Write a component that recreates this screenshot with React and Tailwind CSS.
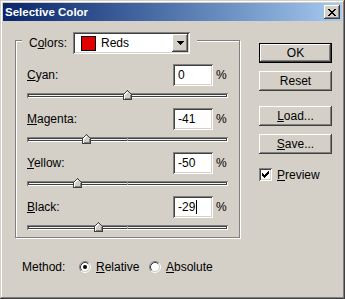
import React from "react";

const sunken =
  "shadow-[inset_1px_1px_0_#808080,inset_-1px_-1px_0_#ffffff,inset_2px_2px_0_#404040,inset_-2px_-2px_0_#d4d0c8]";
const raised =
  "shadow-[inset_-1px_-1px_0_#404040,inset_1px_1px_0_#ffffff,inset_-2px_-2px_0_#808080,inset_2px_2px_0_#d4d0c8]";
const track =
  "shadow-[inset_1px_1px_0_#808080,inset_-1px_-1px_0_#ffffff,inset_2px_2px_0_#404040,inset_-2px_-2px_0_#404040]";

function Field({ value, caret }) {
  return (
    <div className={`w-[40px] h-[22px] bg-white ${sunken} flex items-center pl-[5px]`}>
      <span className="leading-[14px]">{value}</span>
      {caret && <span className="w-px h-[14px] bg-black ml-px" />}
    </div>
  );
}

function Slider({ value }) {
  return (
    <div className={`relative mt-[7px] w-[201px] h-[5px] bg-[#f4f4f4] ${track}`}>
      <div className="absolute left-[100px] top-[1px] w-px h-[3px] bg-[#a0a0a0]" />
      <svg
        className="absolute top-[-3px]"
        style={{ left: value + 96 }}
        width="9"
        height="10"
        viewBox="0 0 9 10"
        shapeRendering="crispEdges"
      >
        <path d="M0.5 9.5V4.5L4.5 0.5L8.5 4.5V9.5Z" fill="#d4d0c8" />
        <path d="M0.5 9.5V4.5L4.5 0.5" fill="none" stroke="#404040" />
        <path d="M1.5 8.5V4.9L4.5 1.9" fill="none" stroke="#ffffff" />
        <path d="M4.5 0.5L8.5 4.5V9.5H0.5" fill="none" stroke="#404040" />
        <path d="M7.5 5V8.5H1.5" fill="none" stroke="#808080" />
      </svg>
    </div>
  );
}

function Row({ label, value, caret }) {
  return (
    <div className="flex flex-col">
      <div className="flex items-center h-[22px] w-[200px]">
        <span className="w-[146px] leading-[14px]">{label}</span>
        <Field value={value} caret={caret} />
        <span className="ml-[3px] leading-[14px]">%</span>
      </div>
      <Slider value={parseInt(value, 10)} />
    </div>
  );
}

function Button({ children, def, className = "" }) {
  return (
    <div
      className={`w-[73px] h-[20px] ${
        def ? "border border-black" : ""
      } ${className}`}
    >
      <div className={`w-full h-full bg-[#d4d0c8] ${raised} flex items-center justify-center leading-[14px]`}>
        {children}
      </div>
    </div>
  );
}

function Radio({ checked }) {
  return (
    <svg width="12" height="12" viewBox="0 0 12 12">
      <circle cx="6" cy="6" r="4.2" fill="#ffffff" />
      <path d="M2.11 9.89A5.5 5.5 0 0 1 9.89 2.11" fill="none" stroke="#808080" />
      <path d="M9.89 2.11A5.5 5.5 0 0 1 2.11 9.89" fill="none" stroke="#ffffff" />
      <path d="M2.82 9.18A4.5 4.5 0 0 1 9.18 2.82" fill="none" stroke="#404040" />
      <path d="M9.18 2.82A4.5 4.5 0 0 1 2.82 9.18" fill="none" stroke="#d4d0c8" />
      {checked && <circle cx="6" cy="6" r="2" fill="#000000" />}
    </svg>
  );
}

export default function App() {
  const rows = [
    { label: <><u>C</u>yan:</>, value: "0" },
    { label: <><u>M</u>agenta:</>, value: "-41" },
    { label: <><u>Y</u>ellow:</>, value: "-50" },
    { label: <><u>B</u>lack:</>, value: "-29", caret: true },
  ];
  return (
    <div className="w-[345px] h-[299px] bg-[#d4d0c8] p-[3px] shadow-[inset_-1px_-1px_0_#404040,inset_1px_1px_0_#d4d0c8,inset_-2px_-2px_0_#808080,inset_2px_2px_0_#ffffff] font-['Liberation_Sans',Arial,sans-serif] text-[12px] text-black">
      <div className="h-[18px] flex items-center justify-between px-[2px] bg-linear-to-r from-[#0a246a] to-[#a6caf0]">
        <span className="text-white font-bold text-[11.5px] leading-[14px]">Selective Color</span>
        <div className={`w-[16px] h-[14px] bg-[#d4d0c8] ${raised} flex items-center justify-center`}>
          <svg width="8" height="7" viewBox="0 0 8 7" shapeRendering="crispEdges">
            <path
              d="M0 0h2v1h-2zM6 0h2v1h-2zM1 1h2v1h-2zM5 1h2v1h-2zM2 2h4v1h-4zM3 3h2v1h-2zM2 4h4v1h-4zM1 5h2v1h-2zM5 5h2v1h-2zM0 6h2v1h-2zM6 6h2v1h-2z"
              fill="#000"
            />
          </svg>
        </div>
      </div>
      <div className="flex h-[275px]">
        <div className="flex flex-col pl-[12px] pt-[19px]">
          <div className="w-[225px] h-[198px] border border-[#808080] shadow-[inset_1px_1px_0_#ffffff,1px_1px_0_#ffffff] flex flex-col">
            <div className="-mt-[9px] ml-[6px] self-start flex items-center bg-[#d4d0c8] px-[7px] h-[22px]">
              <span className="w-[44px] leading-[14px]">
                C<u>o</u>lors:
              </span>
              <div className={`w-[117px] h-[22px] bg-white ${sunken} flex items-center p-[2px]`}>
                <div className="ml-[6px] w-[15px] h-[15px] border border-black bg-[#e00000]" />
                <span className="ml-[5px] flex-1 leading-[14px]">Reds</span>
                <div className={`w-[16px] h-[18px] bg-[#d4d0c8] ${raised} flex items-center justify-center`}>
                  <svg width="7" height="4" viewBox="0 0 7 4" shapeRendering="crispEdges">
                    <path d="M0 0h7v1h-7zM1 1h5v1h-5zM2 2h3v1h-3zM3 3h1v1h-1z" fill="#000" />
                  </svg>
                </div>
              </div>
            </div>
            <div className="ml-[11px] mt-[10px] flex flex-col gap-[10px]">
              {rows.map((r, i) => (
                <Row key={i} {...r} />
              ))}
            </div>
          </div>
          <div className="mt-[23px] ml-[7px] flex items-center h-[12px]">
            <span className="w-[57px] leading-[14px]">Method:</span>
            <Radio checked />
            <span className="ml-[5px] w-[53px] leading-[14px]">
              <u>R</u>elative
            </span>
            <Radio />
            <span className="ml-[5px] leading-[14px]">
              <u>A</u>bsolute
            </span>
          </div>
        </div>
        <div className="ml-[19px] pt-[22px] flex flex-col">
          <Button def>OK</Button>
          <Button className="mt-[8px]">Reset</Button>
          <Button className="mt-[15px]">
            <span>
              <u>L</u>oad...
            </span>
          </Button>
          <Button className="mt-[8px]">
            <span>
              <u>S</u>ave...
            </span>
          </Button>
          <div className="mt-[14px] flex items-center h-[13px]">
            <div className={`w-[13px] h-[13px] bg-white ${sunken} flex items-center justify-center`}>
              <svg width="7" height="7" viewBox="0 0 7 7" shapeRendering="crispEdges">
                <path
                  d="M6 0h1v1h-1zM5 1h2v1h-2zM0 2h1v1h-1zM4 2h3v1h-3zM0 3h2v1h-2zM3 3h3v1h-3zM0 4h5v1h-5zM1 5h3v1h-3zM2 6h1v1h-1z"
                  fill="#000"
                />
              </svg>
            </div>
            <span className="ml-[5px] leading-[14px]">
              <u>P</u>review
            </span>
          </div>
        </div>
      </div>
    </div>
  );
}
